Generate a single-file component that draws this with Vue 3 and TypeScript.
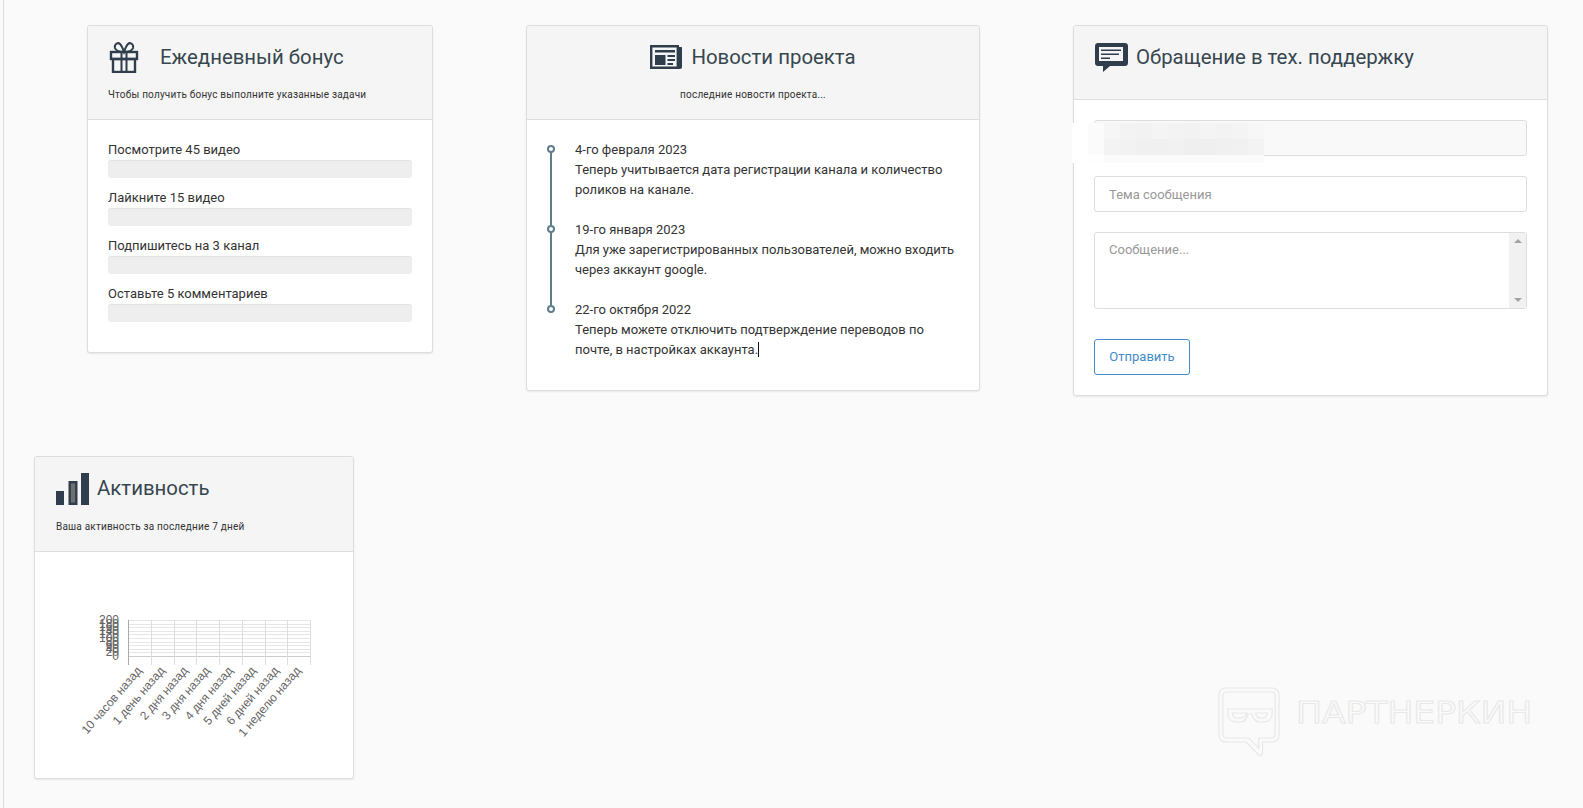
<template>
  <div class="page">
    <div class="top-row">
      <section class="card">
        <header class="card-head bonus-head">
          <div class="title-row">
            <svg class="icon" width="32" height="32" viewBox="0 0 32 32" fill="none" stroke="#2f3d4c" stroke-width="2.4">
              <path d="M16 11C12 11 8 10 7 7C6 3 10 1 12 3C14 5 15 8 16 11C17 8 18 5 20 3C22 1 26 3 25 7C24 10 20 11 16 11Z" stroke-width="2" />
              <rect x="3" y="11" width="26" height="7" />
              <rect x="5" y="18" width="22" height="13" />
              <path d="M13.5 11V31M18.5 11V31" stroke-width="2" />
            </svg>
            <h3>Ежедневный бонус</h3>
          </div>
          <p class="sub">Чтобы получить бонус выполните указанные задачи</p>
        </header>
        <div class="bonus-body">
          <div v-for="task in tasks" :key="task" class="task">
            <div class="task-label">{{ task }}</div>
            <div class="progress"></div>
          </div>
        </div>
      </section>

      <section class="card">
        <header class="card-head centered">
          <div class="title-row news-title">
            <svg width="32" height="24" viewBox="0 0 32 24">
              <path d="M1.2 1.2H27.8V22.8H1.2Z" fill="#f5f5f5" stroke="#2f3d4c" stroke-width="2.4" />
              <path d="M28 2H31C31.6 2 32 2.4 32 3V22C32 23.2 31.2 24 30 24H27Z" fill="#2f3d4c" />
              <path d="M5 5H25V7.4H5ZM5 10H15.5V20H5ZM17.5 10H25V12H17.5ZM17.5 14H25V16H17.5ZM17.5 18H23V20H17.5Z" fill="#2f3d4c" />
            </svg>
            <h3>Новости проекта</h3>
          </div>
          <p class="sub">последние новости проекта...</p>
        </header>
        <ul class="timeline">
          <li v-for="item in news" :key="item.date">
            <div>{{ item.date }}</div>
            <div>{{ item.text }}<span v-if="item.caret" class="caret"></span></div>
          </li>
        </ul>
      </section>

      <section class="card">
        <header class="card-head no-sub">
          <div class="title-row support-title">
            <svg width="33" height="29" viewBox="0 0 33 29">
              <path d="M3 0H30C31.8 0 33 1.2 33 3V20C33 21.8 31.8 23 30 23H15L8 29V23H3C1.2 23 0 21.8 0 20V3C0 1.2 1.2 0 3 0Z" fill="#2f3d4c" />
              <path d="M4 4H28V18H4Z" fill="#f5f5f5" />
              <path d="M6 6.5H26V8H6ZM6 10.5H24V12H6ZM6 14.5H15V16H6Z" fill="#2f3d4c" />
            </svg>
            <h3>Обращение в тех. поддержку</h3>
          </div>
        </header>
        <form class="support-form" @submit.prevent>
          <div class="field">
            <input class="input locked" type="text" disabled />
            <div class="mosaic">
              <i v-for="(shade, i) in mosaic" :key="i" :style="{ background: shade }"></i>
            </div>
          </div>
          <input class="input" type="text" placeholder="Тема сообщения" />
          <div class="field">
            <textarea class="input area" placeholder="Сообщение..."></textarea>
            <div class="fake-scroll"><b class="up"></b><b class="down"></b></div>
          </div>
          <button class="send" type="submit">Отправить</button>
        </form>
      </section>
    </div>

    <section class="card activity">
      <header class="card-head">
        <div class="title-row">
          <svg class="bars" width="33" height="32" viewBox="0 0 33 32">
            <path d="M0 18H8V32H0ZM25 0H33V32H25Z" fill="#2f3d4c" />
            <rect x="13.7" y="9.2" width="6.6" height="21.6" fill="#6f6f6f" stroke="#2f3d4c" stroke-width="2.4" />
          </svg>
          <h3>Активность</h3>
        </div>
        <p class="sub">Ваша активность за последние 7 дней</p>
      </header>
      <svg class="chart" width="318" height="226" viewBox="0 0 318 226">
        <line v-for="(y, i) in gridY" :key="'h' + i" :x1="plot.left" :x2="plot.right" :y1="y" :y2="y" :stroke="i === gridY.length - 1 ? '#ccc' : '#e6e6e6'" />
        <line v-for="(x, i) in gridX" :key="'v' + i" :x1="x" :x2="x" :y1="plot.top" :y2="plot.tick" :stroke="i === 0 ? '#aaa' : '#ddd'" />
        <text v-for="(v, i) in yValues" :key="'y' + v" :x="84" :y="gridY[i] + 3" class="tick" text-anchor="end">{{ v }}</text>
        <text
          v-for="(label, i) in xLabels"
          :key="label"
          class="tick"
          text-anchor="end"
          :x="gridX[i] + step / 2 + 2.5"
          :y="labelY"
          :transform="`rotate(-49 ${gridX[i] + step / 2 + 2.5} ${labelY})`"
        >{{ label }}</text>
      </svg>
    </section>

    <div class="watermark">
      <svg width="62" height="70" viewBox="0 0 64 70" preserveAspectRatio="none" fill="none" stroke="#e8e8e8" stroke-width="1.2">
        <path d="M8 1H56C60 1 63 4 63 8V48C63 52 60 55 56 55H46V66C46 69 43 69 41 67L29 55H8C4 55 1 52 1 48V8C1 4 4 1 8 1Z" />
        <path d="M9 5H55C57.500 5 59 6.500 59 9V47C59 49.500 57.500 51 55 51H42V61L32 51H9C6.500 51 5 49.500 5 47V9C5 6.500 6.500 5 9 5Z" />
        <path d="M10 22H56V26C56 31 53 35 47 35H43C38 35 36 31 35 27H31C30 31 28 35 23 35H19C13 35 10 31 10 26Z" />
        <path d="M15 26H30C29 29 27 31 23 31H19C17 31 15 29 15 26ZM39 26H51C51 29 49 31 47 31H43C41 31 39 29 39 26Z" />
      </svg>
      <span>ПАРТНЕРКИН</span>
    </div>
  </div>
</template>

<script setup lang="ts">
interface NewsItem {
  date: string
  text: string
  caret?: boolean
}

const tasks = ['Посмотрите 45 видео', 'Лайкните 15 видео', 'Подпишитесь на 3 канал', 'Оставьте 5 комментариев']

const news: NewsItem[] = [
  { date: '4-го февраля 2023', text: 'Теперь учитывается дата регистрации канала и количество роликов на канале.' },
  { date: '19-го января 2023', text: 'Для уже зарегистрированных пользователей, можно входить через аккаунт google.' },
  { date: '22-го октября 2022', text: 'Теперь можете отключить подтверждение переводов по почте, в настройках аккаунта.', caret: true }
]

// размытый кусок поверх заблокированного поля
const mosaic = [
  '#fff', '#fbfbfb', '#f6f6f6', '#f3f3f3', '#f2f2f2', '#f4f4f4', '#f3f3f3', '#f2f2f2', '#f4f4f4', '#f3f3f3', '#f4f4f4', '#f7f7f7',
  '#fff', '#fbfbfb', '#f3f3f3', '#f2f2f2', '#f0f0f0', '#f0f0f0', '#f1f1f1', '#efefef', '#efefef', '#f0f0f0', '#f1f1f1', '#f3f3f3',
  '#fff', '#fefefe', '#fbfbfb', '#fbfbfb', '#fbfbfb', '#fbfbfb', '#fbfbfb', '#fbfbfb', '#fbfbfb', '#fbfbfb', '#fbfbfb', '#fbfbfb'
]

// график
const plot = { left: 93, right: 275, top: 68, bottom: 104, tick: 113 }
const labelY = 119
const xLabels = ['10 часов назад', '1 день назад', '2 дня назад', '3 дня назад', '4 дня назад', '5 дней назад', '6 дней назад', '1 неделю назад']
const yValues = [200, 180, 160, 140, 120, 100, 80, 60, 40, 20, 0]
const step = (plot.right - plot.left) / xLabels.length
const gridX = Array.from({ length: xLabels.length + 1 }, (_, i) => Math.round(plot.left + i * step) + 0.5)
const gridY = yValues.map((_, i) => Math.round(plot.top + (i * (plot.bottom - plot.top)) / (yValues.length - 1)) + 0.5)
</script>

<style>
html,
body {
  margin: 0;
  background: #fafafa;
}
</style>

<style scoped>
.page {
  position: relative;
  box-sizing: border-box;
  height: 808px;
  margin-left: 3px;
  padding: 25px 0 0 30px;
  border-left: 1px solid #ddd;
  background: #fafafa;
  overflow: hidden;
  font-family: Roboto, "Liberation Sans", sans-serif;
  font-size: 13px;
  line-height: 20px;
  color: #333;
}

.top-row {
  display: grid;
  grid-template-columns: 346px 454px 475px;
  column-gap: 93px;
  align-items: start;
  padding-left: 53px;
}

.card {
  background: #fff;
  border: 1px solid #ddd;
  border-radius: 3px;
  box-shadow: 0 1px 2px rgba(0, 0, 0, 0.08);
}

.card-head {
  padding: 15px 21px 0;
  background: #f5f5f5;
  border-bottom: 1px solid #ddd;
  border-radius: 2px 2px 0 0;
}

.bonus-head {
  padding-left: 20px;
}

.card-head.no-sub {
  padding-bottom: 12px;
}

.title-row {
  display: flex;
  align-items: center;
  gap: 9px;
  height: 32px;
  margin-bottom: 14px;
}

.title-row h3 {
  margin: 0;
  font-size: 20.4px;
  font-weight: 400;
  color: #37474f;
}

.news-title {
  justify-content: center;
}

.support-title {
  gap: 8px;
}

.title-row .icon {
  margin-right: 11px;
}

.title-row .bars {
  margin-top: 2px;
}

.activity .title-row {
  gap: 8px;
}

.sub {
  margin: 0;
  padding-bottom: 16px;
  font-size: 10px;
  line-height: 16px;
  letter-spacing: 0.2px;
}

.activity .sub {
  padding-top: 1px;
}

.centered .sub {
  text-align: center;
}

.bonus-body {
  padding: 20px;
}

.task {
  margin-bottom: 10px;
}

.progress {
  height: 18px;
  border-radius: 3px;
  background: #eee;
  box-shadow: inset 0 1px 1px rgba(0, 0, 0, 0.05);
}

.timeline {
  margin: 0;
  padding: 20px 21px 10px 48px;
  list-style: none;
}

.timeline li {
  position: relative;
  margin-bottom: 20px;
}

.timeline li::before {
  content: "";
  position: absolute;
  left: -28px;
  top: 5px;
  box-sizing: border-box;
  width: 8px;
  height: 8px;
  border: 2px solid #607d8b;
  border-radius: 50%;
  background: #fff;
  z-index: 1;
}

.timeline li:not(:last-child)::after {
  content: "";
  position: absolute;
  left: -25px;
  top: 9px;
  width: 2px;
  height: 80px;
  background: #607d8b;
}

.caret {
  display: inline-block;
  width: 1px;
  height: 15px;
  background: #111;
  vertical-align: -3px;
}

.support-form {
  display: flex;
  flex-direction: column;
  align-items: flex-start;
  gap: 20px;
  padding: 20px;
}

.field {
  position: relative;
  width: 100%;
  display: flex;
}

.input {
  box-sizing: border-box;
  width: 100%;
  height: 36px;
  padding: 0 14px;
  border: 1px solid #ddd;
  border-radius: 3px;
  background: #fff;
  font: inherit;
  color: #333;
  outline: none;
}

.input::placeholder {
  color: #999;
  opacity: 1;
}

.locked {
  background: #f9f9f9;
}

.area {
  display: block;
  height: 77px;
  padding: 7px 14px;
  resize: none;
  overflow: hidden;
}

.fake-scroll {
  position: absolute;
  top: 1px;
  right: 1px;
  bottom: 1px;
  width: 17px;
  background: #f1f1f1;
}

.fake-scroll b {
  position: absolute;
  left: 5px;
  width: 0;
  height: 0;
  border-left: 4px solid transparent;
  border-right: 4px solid transparent;
}

.fake-scroll .up {
  top: 6px;
  border-bottom: 4px solid #a3a3a3;
}

.fake-scroll .down {
  bottom: 6px;
  border-top: 4px solid #a3a3a3;
}

.mosaic {
  position: absolute;
  left: -22px;
  top: 3px;
  display: grid;
  grid-template-columns: repeat(12, 16px);
  grid-template-rows: 16px 16px 8px;
}

.send {
  width: 96px;
  height: 36px;
  margin-top: 10px;
  border: 1px solid #428bca;
  border-radius: 3px;
  background: #fff;
  font: inherit;
  color: #428bca;
}

.activity {
  width: 320px;
  box-sizing: border-box;
  margin-top: 60px;
}

.chart {
  display: block;
}

.tick {
  font-family: "Liberation Sans", Arial, sans-serif;
  font-size: 12px;
  fill: #666;
}

.watermark {
  position: absolute;
  left: 1214px;
  top: 687px;
  display: flex;
  align-items: flex-start;
  gap: 16px;
}

.watermark span {
  margin-top: 8px;
  font-family: "DejaVu Sans", sans-serif;
  font-size: 30px;
  line-height: 36px;
  color: transparent;
  -webkit-text-stroke: 1px #e8e8e8;
  transform: scaleX(1.15);
  transform-origin: left center;
}
</style>
